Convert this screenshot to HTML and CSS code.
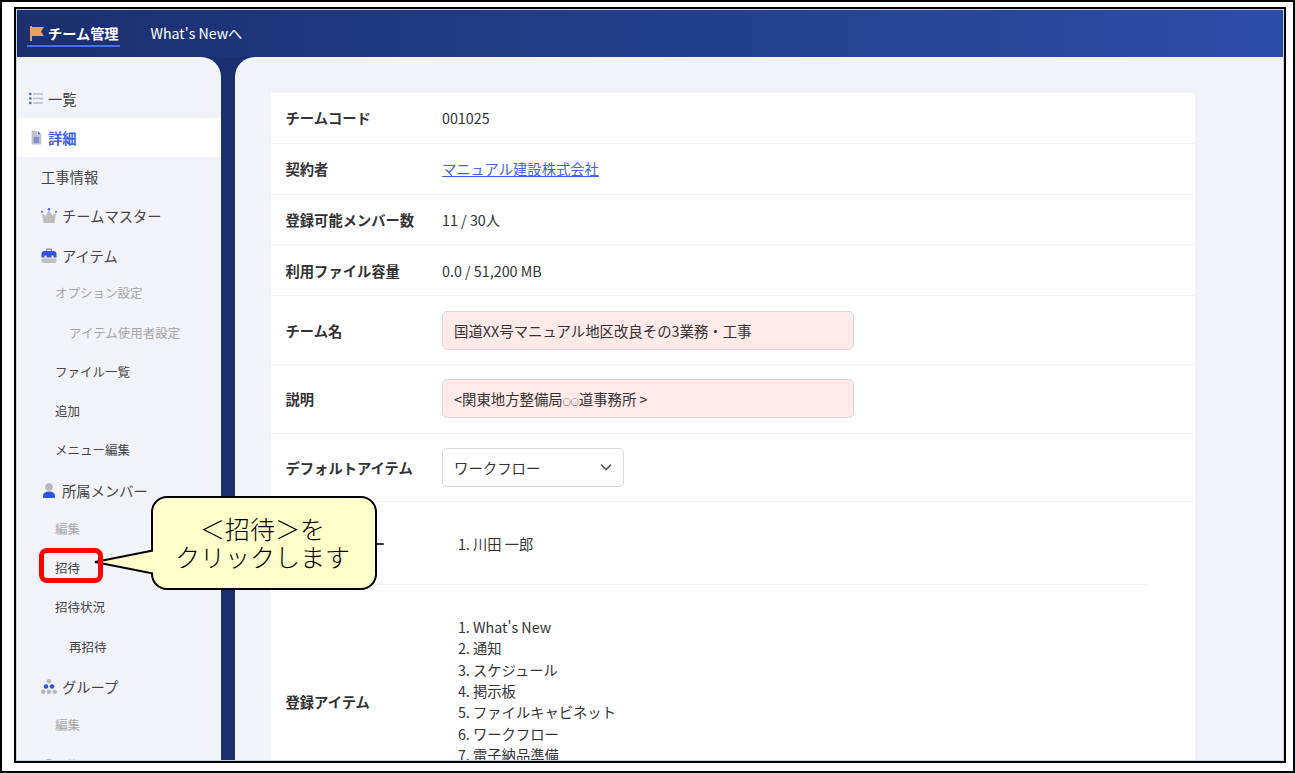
FILE: index.html
```html
<!DOCTYPE html>
<html lang="ja">
<head>
    <meta charset="UTF-8">
    <meta name="viewport" content="width=device-width, initial-scale=1.0">
    <title>チーム管理</title>
    <link rel="stylesheet" href="styles.css">
</head>
<body>
    <div class="moldura">
        <div class="tela">
            <header class="topo">
                <div class="aba ativa">
                    <svg class="iconeBandeira" viewBox="0 0 14 15"><path d="M0 0H2V15H0Z" fill="#f79a5b"/><path d="M2 1H14L11 5.500L14 10H2Z" fill="#f79a5b"/></svg>
                    チーム管理
                </div>
                <div class="aba">What's Newへ</div>
            </header>

            <div class="corpo">
                <nav class="menu">
                    <a class="item nivel0">
                        <svg class="icone" viewBox="0 0 14 12"><g fill="#3f63e6"><circle cx="1.300" cy="1.500" r="1.300"/><circle cx="1.300" cy="6" r="1.300"/><circle cx="1.300" cy="10.500" r="1.300"/></g><g fill="#bdbdbd"><rect x="4" y="0.700" width="10" height="1.500"/><rect x="4" y="5.200" width="10" height="1.500"/><rect x="4" y="9.700" width="10" height="1.500"/></g></svg>
                        一覧
                    </a>
                    <a class="item nivel0 ativo">
                        <svg class="icone" viewBox="0 0 16 16"><path d="M3 0.500H9L9 5.500H14V14.500Q14 16 12.500 16H4.500Q3 16 3 14.500Z" fill="#bfbfc4"/><path d="M10 0.500L14 4.500H10Z" fill="#3f63e6"/><g fill="#3f63e6"><rect x="5.500" y="8" width="6" height="1.200"/><rect x="5.500" y="10.300" width="6" height="1.200"/><rect x="5.500" y="12.600" width="6" height="1.200"/></g></svg>
                        詳細
                    </a>
                    <a class="item semIcone">工事情報</a>
                    <a class="item nivel1">
                        <svg class="icone" viewBox="0 0 16 15"><path d="M1 4.500L4.500 8L8 2.500L11.500 8L15 4.500L13.500 15H2.500Z" fill="#bdbdbd"/><g fill="#3f63e6"><circle cx="1" cy="3.700" r="1"/><circle cx="8" cy="1.300" r="1.300"/><circle cx="15" cy="3.700" r="1"/></g></svg>
                        チームマスター
                    </a>
                    <a class="item nivel1">
                        <svg class="icone" viewBox="0 0 16 15"><path d="M5 3V1.500Q5 0.500 6 0.500H10Q11 0.500 11 1.500V3H9.800V1.700H6.200V3Z" fill="#8f8f8f"/><path d="M0.500 9.500V6Q0.500 3 3.500 3H12.500Q15.500 3 15.500 6V9.500H12.500V7.500H10.500V9.500H5.500V7.500H3.500V9.500Z" fill="#2f55e0"/><path d="M0.500 10.500H15.500V13Q15.500 15 13.500 15H2.500Q0.500 15 0.500 13Z" fill="#bdbdbd"/></svg>
                        アイテム
                    </a>
                    <a class="item nivel2 inativo">オプション設定</a>
                    <a class="item nivel3 inativo">アイテム使用者設定</a>
                    <a class="item nivel2">ファイル一覧</a>
                    <a class="item nivel2">追加</a>
                    <a class="item nivel2">メニュー編集</a>
                    <a class="item nivel1">
                        <svg class="icone" viewBox="0 0 16 15"><circle cx="8" cy="4" r="3.800" fill="#b8b8b8"/><path d="M2 15V13Q2 8.500 8 8.500Q14 8.500 14 13V15Z" fill="#2f55e0"/></svg>
                        所属メンバー
                    </a>
                    <a class="item nivel2 inativo">編集</a>
                    <a class="item nivel2">招待</a>
                    <a class="item nivel2">招待状況</a>
                    <a class="item nivel3">再招待</a>
                    <a class="item nivel1">
                        <svg class="icone" viewBox="0 0 16 15"><circle cx="8" cy="2.300" r="2.300" fill="#b8b8b8"/><circle cx="5" cy="7.500" r="2.300" fill="#2f55e0"/><circle cx="11" cy="7.500" r="2.300" fill="#2f55e0"/><g fill="#b8b8b8"><circle cx="2.300" cy="12.700" r="2.300"/><circle cx="8" cy="12.700" r="2.300"/><circle cx="13.700" cy="12.700" r="2.300"/></g></svg>
                        グループ
                    </a>
                    <a class="item nivel2 inativo">編集</a>
                    <a class="item nivel1 inativo">
                        <svg class="icone" viewBox="0 0 16 14"><circle cx="8" cy="4" r="3.800" fill="#b8b8b8"/></svg>
                        脱退
                    </a>
                </nav>

                <main class="conteudo">
                    <section class="cartao">
                        <div class="linha">
                            <div class="rotulo">チームコード</div>
                            <div>001025</div>
                        </div>
                        <div class="linha">
                            <div class="rotulo">契約者</div>
                            <a class="link">マニュアル建設株式会社</a>
                        </div>
                        <div class="linha">
                            <div class="rotulo">登録可能メンバー数</div>
                            <div>11 / 30人</div>
                        </div>
                        <div class="linha">
                            <div class="rotulo">利用ファイル容量</div>
                            <div>0.0 / 51,200 MB</div>
                        </div>
                        <div class="linha linhaCampo">
                            <div class="rotulo">チーム名</div>
                            <div class="campo erro">国道XX号マニュアル地区改良その3業務・工事</div>
                        </div>
                        <div class="linha linhaCampo">
                            <div class="rotulo">説明</div>
                            <div class="campo erro"><span>&lt;関東地方整備局<span class="circulo">○○</span>道事務所 &gt;</span></div>
                        </div>
                        <div class="linha linhaCampo">
                            <div class="rotulo">デフォルトアイテム</div>
                            <div class="campo selecao">
                                ワークフロー
                                <svg class="seta" viewBox="0 0 12 8"><path d="M1 1.500L6 6.500L11 1.500" fill="none" stroke="#555" stroke-width="1.600"/></svg>
                            </div>
                        </div>
                        <div class="linha linhaMaster">
                            <div class="rotulo">チームマスター</div>
                            <ol class="lista">
                                <li>川田 一郎</li>
                            </ol>
                        </div>
                        <div class="linha linhaItens">
                            <div class="rotulo">登録アイテム</div>
                            <ol class="lista listaItens">
                                <li>What's New</li>
                                <li>通知</li>
                                <li>スケジュール</li>
                                <li>掲示板</li>
                                <li>ファイルキャビネット</li>
                                <li>ワークフロー</li>
                                <li>電子納品準備</li>
                            </ol>
                        </div>
                    </section>
                </main>
            </div>

            <div class="balao">
                <svg class="ponta" viewBox="0 0 62 28"><path d="M62 2L2 14L62 26Z" fill="#ffffcc"/><path d="M60 2.400L2 14L60 25.600" fill="none" stroke="#000" stroke-width="2"/></svg>
                <span>＜招待＞を</span>
                <span>クリックします</span>
            </div>
            <div class="destaque"></div>
        </div>
    </div>
</body>
</html>
```

FILE: styles.css
```css
* {
    padding: 0px;
    margin: 0px;
    box-sizing: border-box;
}

body {
    background-color: white;
    font-family: "Noto Sans CJK JP", "Noto Sans", sans-serif;
    color: #333;
}

.moldura {
    width: 1295px;
    height: 773px;
    border: 2px solid black;
    padding: 5px 7px 8px 12px;
}

.tela {
    height: 100%;
    border: 2px solid black;
    outline: 1px solid #cdd3e4;
    outline-offset: -3px;
    overflow: hidden;
    position: relative;
    display: flex;
    flex-direction: column;
    background-color: #1c2f6e;
}

/* Barra do topo */

.topo {
    height: 48px;
    flex-shrink: 0;
    display: flex;
    align-items: flex-start;
    gap: 31px;
    padding: 14px 0 0 11px;
    background: linear-gradient(90deg, #1c2f6e, #2b4ea5);
    color: white;
    font-size: 14.200px;
}

.aba {
    height: 24px;
    line-height: 20px;
    display: flex;
    align-items: flex-start;
}

.ativa {
    font-weight: 700;
    padding: 0 1px 0 3px;
    border-bottom: 2px solid #4a72e8;
}

.iconeBandeira {
    width: 14px;
    height: 15px;
    margin: 3px 4px 0 0;
}

/* Menu lateral */

.corpo {
    flex: 1;
    min-height: 0;
    display: flex;
    gap: 14px;
}

.menu {
    width: 205px;
    flex-shrink: 0;
    padding-top: 21.500px;
    background-color: #f2f3f8;
    border-top-right-radius: 20px;
    font-size: 14.300px;
}

.item {
    height: 39.250px;
    display: flex;
    align-items: center;
    color: #444;
}

.icone {
    width: 16px;
    height: 15px;
    margin-right: 5px;
    flex-shrink: 0;
}

.nivel0 {
    padding-left: 13px;
}

.nivel0 .icone {
    width: 14px;
}

.ativo {
    background-color: white;
    color: #3f63e6;
    font-weight: 700;
}

.semIcone {
    padding-left: 25px;
}

.nivel1 {
    padding-left: 25px;
}

.nivel2,
.nivel3 {
    font-size: 12.500px;
    padding-bottom: 3px;
}

.nivel2 {
    padding-left: 39px;
}

.nivel3 {
    padding-left: 53px;
}

.inativo {
    color: #a5a5a5;
}

/* Conteudo */

.conteudo {
    flex: 1;
    min-width: 0;
    padding: 36px 89px 0 36px;
    background-color: #f2f3f8;
    border-top-left-radius: 20px;
}

.cartao {
    background-color: white;
    font-size: 14.300px;
}

.linha {
    height: 50.800px;
    display: flex;
    align-items: center;
    padding-left: 14.500px;
    border-bottom: 1px solid #f2f3f8;
}

.linhaCampo {
    height: 68.700px;
}

.linhaMaster {
    height: 83px;
    margin-right: 47px;
}

.linhaItens {
    height: 232px;
    border-bottom: none;
}

.rotulo {
    width: 156.500px;
    flex-shrink: 0;
    font-weight: 700;
}

.link {
    color: #3f63e6;
    text-decoration: underline;
}

.campo {
    width: 411.500px;
    height: 39px;
    display: flex;
    align-items: center;
    justify-content: space-between;
    padding: 0 11px;
    border: 1px solid #d9d9d9;
    border-radius: 5px;
    font-size: 14.400px;
}

.erro {
    background-color: #ffe9e9;
}

.circulo {
    font-size: 8px;
    font-weight: 700;
    color: #222;
}

.selecao {
    width: 182px;
    background-color: white;
}

.seta {
    width: 12px;
    height: 8px;
}

.lista {
    padding-left: 31px;
    line-height: 21.400px;
}

.listaItens {
    align-self: flex-start;
    padding-top: 30.500px;
}

/* Marcacao da captura */

.destaque {
    position: absolute;
    left: 23px;
    top: 539px;
    width: 64px;
    height: 35px;
    border: 5.500px solid #ff0000;
    border-radius: 8px;
}

.balao {
    position: absolute;
    left: 135px;
    top: 487px;
    width: 226px;
    height: 94px;
    padding: 0 3px 2px 0;
    display: flex;
    flex-direction: column;
    align-items: center;
    justify-content: center;
    border: 2px solid black;
    border-radius: 16px;
    background-color: #ffffcc;
    font-size: 25px;
    font-weight: 300;
    line-height: 28px;
    color: #000;
}

.ponta {
    position: absolute;
    left: -60px;
    top: 50px;
    width: 62px;
    height: 28px;
}
```
